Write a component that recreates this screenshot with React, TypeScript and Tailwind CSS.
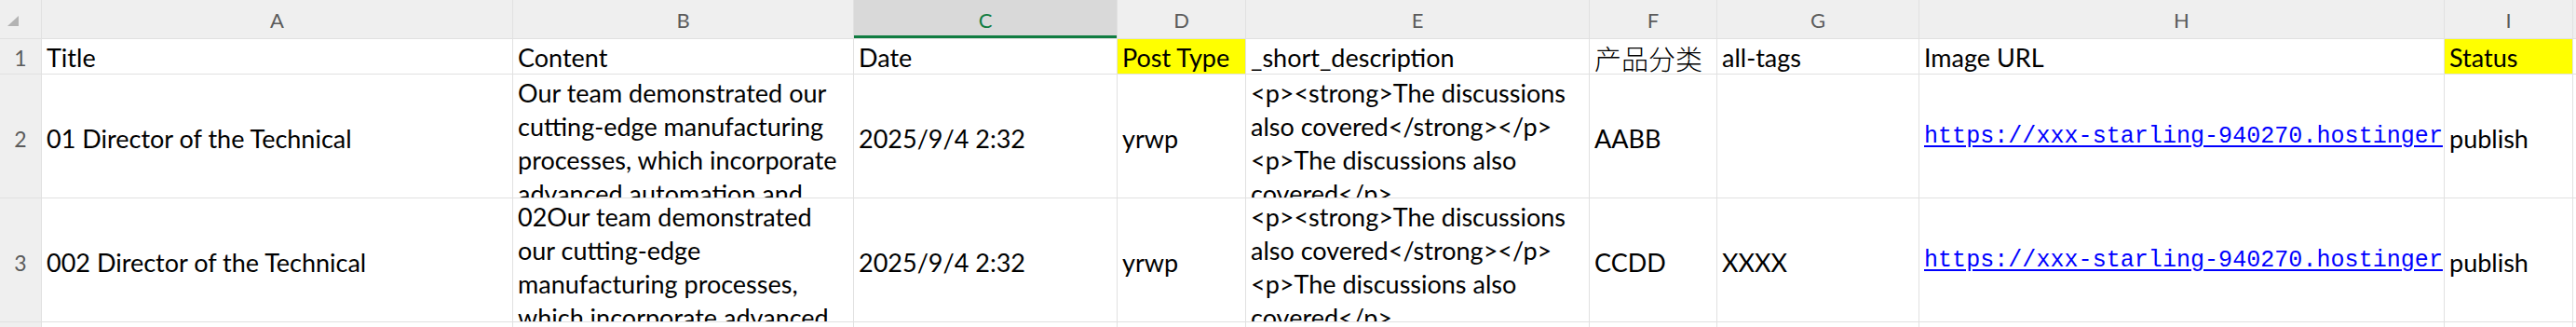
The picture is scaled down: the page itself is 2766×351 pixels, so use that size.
import React from "react";

const FONT = { fontFamily: "Lato, 'Noto Sans CJK SC', sans-serif" };

const cols = ["A", "B", "C", "D", "E", "F", "G", "H", "I", ""];

function ColHead({ l }: { l: string }) {
  const sel = l === "C";
  return (
    <div
      className={
        sel
          ? "flex items-center justify-center bg-[#d9d9d9] text-[#107c41] text-[22px] border-b-[3px] border-[#107c41] pt-[5px]"
          : "flex items-center justify-center bg-[#efefef] text-[#5b5b5b] text-[22px] pt-[2px]"
      }
    >
      {l}
    </div>
  );
}

function RowHead({ n, top }: { n: string; top?: boolean }) {
  return (
    <div className={"flex items-center justify-center bg-[#efefef] text-[#5b5b5b] text-[23px] " + (top ? "pt-[3px]" : "pt-[6px]")}>
      {n}
    </div>
  );
}

function HCell({ t, y, cjk }: { t: string; y?: boolean; cjk?: boolean }) {
  return (
    <div
      className={
        "flex items-center pl-[5px] pt-[3px] text-[27px] leading-[32px] text-black whitespace-nowrap overflow-hidden " +
        (y ? "bg-[#ffff00]" : "bg-white")
      }
    >
      {cjk ? (
        <span className="text-[29px] leading-[30px] font-light" style={{ fontFamily: "'Noto Sans CJK SC', sans-serif" }}>
          {t}
        </span>
      ) : (
        t
      )}
    </div>
  );
}

function Cell({ t }: { t: string }) {
  return (
    <div className="flex items-center pl-[5px] pt-[6px] text-[27px] text-black bg-white whitespace-nowrap overflow-hidden">
      {t}
    </div>
  );
}

function Wrap({ lines }: { lines: string[] }) {
  return (
    <div className="bg-white pl-[5px] pt-[2px] text-[27px] leading-[36px] text-black overflow-hidden">
      {lines.map((l, i) => (
        <div key={i} className="whitespace-nowrap">
          {l}
        </div>
      ))}
    </div>
  );
}

function Link() {
  return (
    <div className="flex items-center bg-white pl-[5px] pt-[2px] overflow-hidden whitespace-nowrap">
      <span
        className="text-[25px] text-[#0000ff] underline underline-offset-[3px]"
        style={{ fontFamily: "'Liberation Mono', monospace", letterSpacing: "0.05px" }}
      >
        https://xxx-starling-940270.hostinger
      </span>
    </div>
  );
}

const descLines = [
  "<p><strong>The discussions",
  "also covered</strong></p>",
  "<p>The discussions also",
  "covered</p>",
];

export default function App() {
  return (
    <div className="w-[2766px] h-[351px] overflow-hidden bg-[#e1e1e1]" style={FONT}>
      <div className="grid gap-px grid-cols-[44px_505px_365px_282px_137px_368px_136px_216px_563px_137px_1fr] grid-rows-[41px_37px_132px_132px_40px]">
        {/* corner */}
        <div className="bg-[#efefef] flex items-start pl-[8px] pt-[17px]">
          <svg width="13" height="12" viewBox="0 0 13 12">
            <polygon points="12,0 12,11 0,11" fill="#b3b3b3" />
          </svg>
        </div>
        {cols.map((c, i) => (
          <ColHead key={i} l={c} />
        ))}

        {/* row 1 */}
        <RowHead n="1" top />
        <HCell t="Title" />
        <HCell t="Content" />
        <HCell t="Date" />
        <HCell t="Post Type" y />
        <HCell t="_short_description" />
        <HCell t="产品分类" cjk />
        <HCell t="all-tags" />
        <HCell t="Image URL" />
        <HCell t="Status" y />
        <div className="bg-white" />

        {/* row 2 */}
        <RowHead n="2" />
        <Cell t="01 Director of the Technical" />
        <Wrap
          lines={[
            "Our team demonstrated our",
            "cutting-edge manufacturing",
            "processes, which incorporate",
            "advanced automation and",
          ]}
        />
        <Cell t="2025/9/4 2:32" />
        <Cell t="yrwp" />
        <Wrap lines={descLines} />
        <Cell t="AABB" />
        <Cell t="" />
        <Link />
        <Cell t="publish" />
        <div className="bg-white" />

        {/* row 3 */}
        <RowHead n="3" />
        <Cell t="002 Director of the Technical" />
        <Wrap
          lines={[
            "02Our team demonstrated",
            "our cutting-edge",
            "manufacturing processes,",
            "which incorporate advanced",
          ]}
        />
        <Cell t="2025/9/4 2:32" />
        <Cell t="yrwp" />
        <Wrap lines={descLines} />
        <Cell t="CCDD" />
        <Cell t="XXXX" />
        <Link />
        <Cell t="publish" />
        <div className="bg-white" />

        {/* row 4 */}
        <div className="bg-[#efefef]" />
        {cols.map((_, i) => (
          <div key={i} className="bg-white" />
        ))}
      </div>
    </div>
  );
}
